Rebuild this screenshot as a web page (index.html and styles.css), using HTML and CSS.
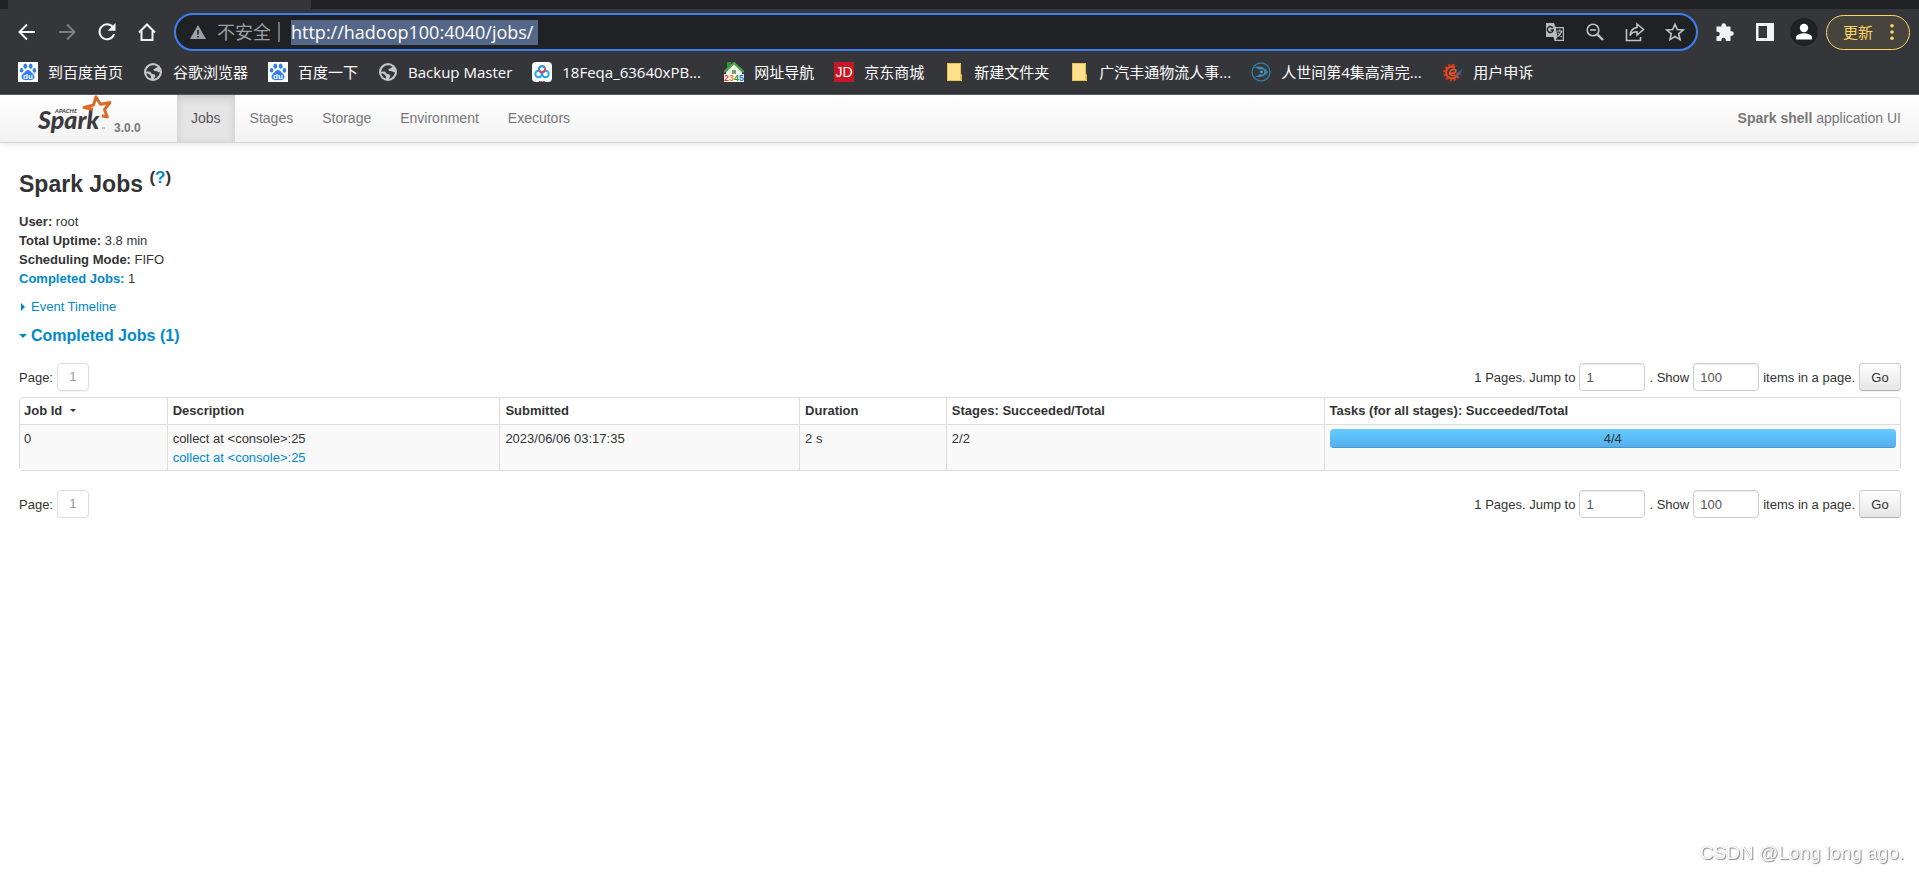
FILE: index.html
```html
<!DOCTYPE html>
<html lang="zh-CN">
<head>
<meta charset="utf-8">
<title>Spark shell - Spark Jobs</title>
<link rel="stylesheet" href="styles.css">
</head>
<body>
<svg class="defs" aria-hidden="true">
  <symbol id="baidu" viewBox="0 0 20 20">
    <rect width="20" height="20" fill="#fff"/>
    <g fill="#2f7df6"><ellipse cx="7.3" cy="4.2" rx="1.9" ry="2.6"/><ellipse cx="12.7" cy="4.2" rx="1.9" ry="2.6"/><ellipse cx="3.6" cy="8.2" rx="1.8" ry="2.3"/><ellipse cx="16.4" cy="8.4" rx="1.8" ry="2.3"/><path d="M10 8c2.2 0 2.8 1.9 4.4 3.3 1.6 1.3 2.5 2.600 2 4.300-.5 2.300-2.500 2.700-6.400 2.500-3.900.2-5.900-.2-6.400-2.500-.4-1.700.4-3 2-4.300C7.200 9.900 7.800 8 10 8z"/></g>
    <text x="10" y="17" text-anchor="middle" class="paw-text">du</text>
  </symbol>
  <symbol id="globe" viewBox="0 0 20 20">
    <circle cx="10" cy="10" r="9" fill="#c3c6ca"/>
    <path d="M9.500 3.200c2.300-.3 3.800.3 5.200 1.800-1.900.3-2 1.700-3.600 1.900-.7.100-.8.900-.3 1.500.8.900 2.700.2 3.700 1.200 1 .9 1.900.5 2.300.1-.1 3.600-2.700 6.400-5.900 7 .3-1.400 1.600-1.800 1.400-3.300-.3-1.400-2.500-1-3.600-1.700-1-.6-.7-1.900-2.400-2.100-1.300-.1-2.200 0-3.100.3.100-3.300 2.700-6.400 6.300-6.700z" fill="#35363a"/>
    <path d="M3.300 11.500c1.700-.4 2.700.3 3.200 1.200.5.900 1.700 1 1.500 2.200l-.4 1.700c-2.300-.9-3.900-2.700-4.300-5.100z" fill="#35363a"/>
  </symbol>
  <symbol id="folder" viewBox="0 0 20 20">
    <path d="M3 1h14v11l1 1v6H3z" fill="#ffe18b"/><path d="M3.500 1.500h13v11M3.500 1.500v17h13v-5h1v5" fill="none" stroke="#e8c24e"/>
  </symbol>
</svg>

<header class="browser">
  <div class="tabs"><span class="tab"></span></div>
  <div class="toolbar">
    <button class="tool" aria-label="Back"><svg viewBox="0 0 20 20"><path d="M18 10H3M10 2.500 2.500 10l7.500 7.500" class="line"/></svg></button>
    <button class="tool dim" aria-label="Forward"><svg viewBox="0 0 20 20"><path d="M2 10h15M10 2.500 17.500 10 10 17.500" class="line"/></svg></button>
    <button class="tool" aria-label="Reload"><svg viewBox="0 0 20 20"><path d="M16 5.200A7.500 7.500 0 1 0 17.200 12" class="line"/><path d="M18.500 1v7.800h-7.800z" fill="currentColor"/></svg></button>
    <button class="tool" aria-label="Home"><svg viewBox="0 0 20 20"><path d="M2 10.500 10 2.500l8 8M4.500 9v9h11V9" class="line"/></svg></button>
    <div class="omnibox">
      <svg class="warn" viewBox="0 0 16 16"><path d="M8 1 16 15H0z" fill="#9aa0a6"/><path d="M8 6v4.500M8 12v1.600" stroke="#202124" stroke-width="1.600"/></svg>
      <label class="insecure" for="url">不安全</label>
      <span class="bar"></span>
      <input class="url" id="url" type="text" value="http://hadoop100:4040/jobs/">
      <div class="actions">
        <button aria-label="Translate"><svg viewBox="0 0 20 20"><path d="M1 1h8l1.500 4H19v14H9.500L8.500 15H1z" fill="#b7b9bd"/><path d="M11 6.200h6.800v11.600h-7l1.700-2.800z" fill="#202124"/><path d="M12 9h5.500M14.700 7.500V9M16.700 9q-1 4-4.200 5.500M13 10.500q1.500 3 4 4.500" fill="none" stroke="#b7b9bd" stroke-width="1.200"/><path d="M7.800 5.800A3 3 0 1 0 8.300 8H5.700" fill="none" stroke="#202124" stroke-width="1.400"/></svg></button>
        <button aria-label="Zoom"><svg viewBox="0 0 20 20"><circle cx="8" cy="8" r="5.800" class="thin"/><path d="M12.300 12.300 18 18" stroke="currentColor" stroke-width="2.400"/><path d="M5 8h6" class="thin"/></svg></button>
        <button aria-label="Share"><svg viewBox="0 0 20 20"><path d="M1.500 7v11.500h14V15" class="thin"/><path d="M12 2l6.500 5.500L12 13V9.800c-3.500 0-5.500 1.200-7 3.700.5-4 3-7.500 7-8z" class="thin"/></svg></button>
        <button aria-label="Bookmark"><svg viewBox="0 0 20 20"><path d="m10 2.200 2.300 5.300 5.900.5-4.500 3.900 1.400 5.700L10 14.500l-5.100 3.100 1.400-5.700L1.800 8l5.900-.5z" class="thin"/></svg></button>
      </div>
    </div>
    <button class="tool" aria-label="Extensions"><svg viewBox="0 0 20 20"><path d="M1.500 4.500h5V3.500a2.300 2.300 0 0 1 4.600 0v1h4.400v4.700h1a2.300 2.300 0 0 1 0 4.600h-1V19h-4.700v-1a2.200 2.200 0 0 0-4.400 0v1H1.500v-4.700h1a2.300 2.300 0 0 0 0-4.600h-1z" fill="currentColor"/></svg></button>
    <button class="tool" aria-label="Side panel"><svg viewBox="0 0 20 20"><path d="M1 1h18v18H1zM3.500 4v12H12V4z" fill="currentColor" fill-rule="evenodd"/></svg></button>
    <button class="avatar" aria-label="Profile"><svg viewBox="0 0 20 20"><circle cx="10" cy="6" r="4.200" fill="#fff"/><path d="M2 17.500v-2.300c0-2.800 5.500-4 8-4s8 1.200 8 4v2.300z" fill="#fff"/></svg></button>
    <button class="update">更新<svg viewBox="0 0 4 18"><circle cx="2" cy="2" r="2"/><circle cx="2" cy="9" r="2"/><circle cx="2" cy="16" r="2"/></svg></button>
  </div>
  <nav class="bookmarks" aria-label="Bookmarks">
    <a href="#"><svg><use href="#baidu"/></svg>到百度首页</a>
    <a href="#"><svg><use href="#globe"/></svg>谷歌浏览器</a>
    <a href="#"><svg><use href="#baidu"/></svg>百度一下</a>
    <a href="#"><svg><use href="#globe"/></svg>Backup Master</a>
    <a class="long" href="#"><svg viewBox="0 0 20 20"><rect width="20" height="20" rx="4" fill="#fff"/><g fill="none" stroke-width="1.900"><circle cx="6.500" cy="12" r="3.200" stroke="#1aa5f5"/><circle cx="13.500" cy="12" r="3.200" stroke="#1aa5f5"/><circle cx="10" cy="7.300" r="3" stroke="#e8404f"/><path d="M7.200 8.500a3 3 0 0 1 5.600-2.500" stroke="#1aa5f5"/></g><path d="M7 19h3.500v1H7z" fill="#e8404f"/><path d="M10.500 19H13v1h-2.500z" fill="#1a73e8"/></svg>18Feqa_63640xPB...</a>
    <a href="#"><svg viewBox="0 0 20 20"><path d="M3 0h4v3L3 6z" fill="#2a9a31"/><path d="M10 2 18 10v4H2v-4z" fill="#eef4e8"/><path d="M0 10 10 1l10 9" fill="none" stroke="#4aa84a" stroke-width="2"/><path d="M8 8h4v4H8z" fill="#7a9e65"/><path d="M0 12h20v8H0z" fill="#fff"/><text x="0" y="19" class="house-text"><tspan fill="#e33">2</tspan><tspan fill="#f28a12">3</tspan><tspan fill="#2a9a31">4</tspan><tspan fill="#2673d8">5</tspan></text></svg>网址导航</a>
    <a href="#"><svg viewBox="0 0 20 20"><rect width="20" height="20" fill="#c81623"/><text x="10" y="15" text-anchor="middle" class="jd-text">JD</text></svg>京东商城</a>
    <a href="#"><svg><use href="#folder"/></svg>新建文件夹</a>
    <a href="#"><svg><use href="#folder"/></svg>广汽丰通物流人事...</a>
    <a class="long" href="#"><svg viewBox="0 0 20 20"><circle cx="10" cy="10" r="9" fill="none" stroke="#347b9f" stroke-width="1.400"/><path d="M3 6C8 3 14 5 17 10c-3 4.700-8.500 6.500-13.500 4 3 .3 4-.5 4.500-1.500a3.500 3.500 0 0 0 0-5C7 6.200 5 6 3 6z" fill="#3a8ab2"/><circle cx="10.500" cy="10" r="2.800" fill="#35363a"/><circle cx="10.500" cy="10" r="1.400" fill="#4aa0c8"/></svg>人世间第4集高清完...</a>
    <a href="#"><svg viewBox="0 0 20 20"><circle cx="9" cy="10.500" r="7.600" fill="none" stroke="#d83a1c" stroke-width="2.400" stroke-dasharray="2.200 1.780"/><circle cx="9" cy="10.500" r="5.900" fill="none" stroke="#e4481f" stroke-width="2.200"/><path d="M12 10V4l8-3v11z" fill="#35363a"/><path d="M6.500 11.500c4 0 6.500-1 6.500-2.700S8.500 6.500 7 9.500s1 5 5.500 3.500" fill="none" stroke="#f0562a" stroke-width="1.600"/><path d="M12 14c4-.5 7-4 7.500-9-1.500 3.500-3.500 5.800-6 6.800z" fill="#1277b8"/></svg>用户申诉</a>
  </nav>
</header>

<nav class="navbar">
  <a class="brand" href="#">
    <svg class="logo" viewBox="0 0 76 42">
      <text x="17" y="18" class="logo-small">APACHE</text>
      <text x="0" y="34" class="logo-text">Spark</text>
      <path d="M55 14.500 46 12.500l9.500-2.500L58 2l4.500 7.200L72 7.500l-5.500 7 2.800 7.500-5.500-1.200" fill="none" stroke="#dc6a28" stroke-width="3" stroke-linejoin="round"/>
      <path d="M64 33h3" stroke="#999"/>
    </svg><span class="version">3.0.0</span>
  </a>
  <ul class="menu">
    <li><a class="active" href="#">Jobs</a></li>
    <li><a href="#">Stages</a></li>
    <li><a href="#">Storage</a></li>
    <li><a href="#">Environment</a></li>
    <li><a href="#">Executors</a></li>
  </ul>
  <p class="app"><strong>Spark shell</strong> application UI</p>
</nav>

<main class="page">
  <h1>Spark Jobs <sup>(<a href="#">?</a>)</sup></h1>
  <ul class="summary">
    <li><strong>User:</strong> root</li>
    <li><strong>Total Uptime:</strong> 3.8 min</li>
    <li><strong>Scheduling Mode:</strong> FIFO</li>
    <li><a href="#completed"><strong>Completed Jobs:</strong></a> 1</li>
  </ul>
  <a class="toggle" href="#"><span class="arrow closed"></span>Event Timeline</a>
  <h2 id="completed"><a class="toggle" href="#"><span class="arrow open"></span>Completed Jobs (1)</a></h2>

  <form class="pager">
    <span>Page:</span><a class="number" href="#">1</a>
    <label class="jump" for="jump-top">1 Pages. Jump to</label><input id="jump-top" type="text" value="1">
    <label class="show" for="show-top">. Show</label><input id="show-top" type="text" value="100">
    <span>items in a page.</span><button type="button">Go</button>
  </form>
  <table class="jobs">
    <colgroup><col class="c-id"><col class="c-desc"><col class="c-sub"><col class="c-dur"><col class="c-stages"><col></colgroup>
    <thead>
      <tr><th>Job Id <span class="sort"></span></th><th>Description</th><th>Submitted</th><th>Duration</th><th>Stages: Succeeded/Total</th><th>Tasks (for all stages): Succeeded/Total</th></tr>
    </thead>
    <tbody>
      <tr><td>0</td><td>collect at &lt;console&gt;:25<br><a href="#">collect at &lt;console&gt;:25</a></td><td>2023/06/06 03:17:35</td><td>2 s</td><td>2/2</td><td><div class="progress">4/4</div></td></tr>
    </tbody>
  </table>
  <form class="pager">
    <span>Page:</span><a class="number" href="#">1</a>
    <label class="jump" for="jump-bottom">1 Pages. Jump to</label><input id="jump-bottom" type="text" value="1">
    <label class="show" for="show-bottom">. Show</label><input id="show-bottom" type="text" value="100">
    <span>items in a page.</span><button type="button">Go</button>
  </form>
</main>
<div class="watermark">CSDN @Long long ago.</div>
</body>
</html>
```

FILE: styles.css
```css
* { box-sizing: border-box; }
body {
  margin: 0;
  background: #fff;
  color: #333;
  font: 13px/19px "Liberation Sans", Arial, sans-serif;
}
a { color: #08c; text-decoration: none; }
button, input { font: inherit; margin: 0; }
ul { list-style: none; margin: 0; padding: 0; }
.defs { display: none; }

/* Browser chrome */
.browser {
  background: #35363a;
  border-bottom: 1px solid #5b5c60;
  color: #fff;
  font-family: "Open Sans", "Noto Sans CJK SC", sans-serif;
}
.browser button { border: 0; padding: 0; background: none; color: inherit; }
.browser svg { display: block; }
.tabs { height: 9px; background: #202124; }
.tab { display: block; width: 303px; height: 9px; margin-left: 8px; background: #35363a; }
.toolbar {
  display: flex;
  align-items: center;
  gap: 20px;
  padding: 4px 9px 3px 17px;
}
.tool svg, .actions svg { width: 20px; height: 20px; }
.toolbar .tool { color: #f1f3f4; }
.toolbar .dim { color: #7d7e82; }
.line { fill: none; stroke: currentColor; stroke-width: 2; }
.thin { fill: none; stroke: currentColor; stroke-width: 1.600; }
.omnibox {
  flex: 1;
  display: flex;
  align-items: center;
  height: 38px;
  margin-right: -3px;
  margin-left: -3px;
  padding: 0 11px 0 14px;
  border: 2px solid #3f7ff0;
  border-radius: 19px;
  background: #202124;
}
.warn { width: 16px; height: 16px; }
.insecure { margin-left: 11px; color: #9aa0a6; font-size: 18px; line-height: 26px; }
.bar { width: 2px; height: 20px; margin: 0 11px 0 7px; background: #6d7074; }
.url {
  width: 247px;
  height: 25px;
  padding: 0;
  border: 0;
  outline: 0;
  background: #546789;
  color: #fff;
  font-size: 18px;
}
.actions { display: flex; gap: 20px; margin-left: auto; color: #c0c2c5; }
.toolbar .avatar {
  display: grid;
  place-items: center;
  width: 28px;
  height: 28px;
  margin-left: -5px;
  border-radius: 50%;
  background: #202124;
}
.avatar svg { width: 20px; height: 20px; }
.toolbar .update {
  display: flex;
  align-items: center;
  gap: 17px;
  height: 35px;
  margin-left: -12px;
  padding: 0 15px 0 16px;
  border: 1px solid #fdd663;
  border-radius: 18px;
  background: #47443d;
  color: #fdd663;
  font-size: 15px;
}
.update svg { width: 4px; height: 16px; fill: #fdd663; }
.bookmarks {
  display: flex;
  gap: 20px;
  padding: 5px 18px 9px;
  font-size: 15px;
  line-height: 26px;
  white-space: nowrap;
}
.bookmarks a { display: flex; align-items: center; gap: 10px; color: #fff; }
.bookmarks .long { min-width: 172px; }
.bookmarks svg { width: 20px; height: 20px; }
.paw-text { font: bold 8px "Liberation Sans", sans-serif; fill: #fff; }
.house-text { font: bold 9px "Liberation Sans", sans-serif; }
.jd-text { font: 14px "Liberation Sans", sans-serif; fill: #fff; }

/* Spark navigation */
.navbar {
  display: flex;
  height: 48px;
  padding-right: 18px;
  border-bottom: 1px solid #d4d4d4;
  background: linear-gradient(#fff, #f2f2f2);
  box-shadow: 0 1px 10px rgba(0, 0, 0, .1);
  color: #777;
  font-size: 14px;
  line-height: 47px;
}
.brand { display: flex; width: 177px; padding-left: 38px; color: #777; }
.logo { width: 76px; height: 42px; }
.logo-text { font: italic 900 25px Lato, sans-serif; fill: #3c3a3e; }
.logo-small { font: italic bold 6px Lato, sans-serif; fill: #3c3a3e; }
.version { padding-top: 10px; font-size: 12px; font-weight: bold; }
.menu { display: flex; gap: 1px; }
.menu a { display: block; padding: 0 14px; color: #777; }
.menu .active { background: #e5e5e5; color: #555; box-shadow: inset 0 3px 8px rgba(0, 0, 0, .125); }
.app { margin: 0 0 0 auto; }

/* Jobs page */
.page { padding: 24px 18px 0 19px; }
h1 { margin: 0; font-size: 23px; line-height: 34px; }
sup { font-size: 17px; line-height: 0; }
.summary { margin: 11px 0 9px; }
.toggle { display: flex; align-items: center; }
.arrow { width: 12px; }
.arrow::before { content: ""; display: block; width: 0; margin-left: 2px; border: 4px solid transparent; }
.closed::before { border-left-color: #08c; border-right: 0; }
.open::before { margin-left: 0; border-top-color: #08c; border-bottom: 0; }
h2 { margin: 9px 0 17px; font-size: 16px; line-height: 21px; }
.pager { display: flex; align-items: center; gap: 4px; }
.number {
  width: 32px;
  border: 1px solid #ddd;
  border-radius: 4px;
  box-shadow: 0 1px 2px rgba(0, 0, 0, .05);
  color: #999;
  line-height: 26px;
  text-align: center;
}
.jump { margin-left: auto; }
.pager input {
  width: 66px;
  height: 28px;
  padding: 1px 6px 0;
  border: 1px solid #ccc;
  border-radius: 4px;
  box-shadow: inset 0 1px 1px rgba(0, 0, 0, .075);
  color: #555;
}
.pager button {
  width: 42px;
  height: 28px;
  border: 1px solid #ccc;
  border-bottom-color: #b3b3b3;
  border-radius: 4px;
  background: linear-gradient(#fff, #e6e6e6);
  box-shadow: 0 1px 2px rgba(0, 0, 0, .05);
  color: #333;
}
.jobs {
  width: 100%;
  margin: 6px 0 19px;
  border: 1px solid #ddd;
  border-radius: 4px;
  border-spacing: 0;
  table-layout: fixed;
}
.c-id { width: 7.8%; }
.c-desc { width: 17.7%; }
.c-sub { width: 15.94%; }
.c-dur { width: 7.81%; }
.c-stages { width: 20.09%; }
th, td { padding: 4px; text-align: left; vertical-align: top; }
th { line-height: 18px; }
td { padding-bottom: 3px; border-top: 1px solid #ddd; background: #f9f9f9; }
th + th, td + td { padding-left: 5px; border-left: 1px solid #ddd; }
.sort { display: inline-block; margin: 0 0 3px 4px; border: 3px solid transparent; border-top-color: #333; border-bottom: 0; }
.progress {
  border-radius: 4px;
  background: linear-gradient(#64cbff, #54aeed);
  box-shadow: inset 0 -1px 0 rgba(0, 0, 0, .15);
  line-height: 19px;
  text-align: center;
}
.watermark {
  position: fixed;
  right: 15px;
  bottom: 7px;
  color: #fff;
  font-size: 19px;
  line-height: 24px;
  text-shadow: 1px 1px 1px #888, 0 0 1px #aaa;
}
```
